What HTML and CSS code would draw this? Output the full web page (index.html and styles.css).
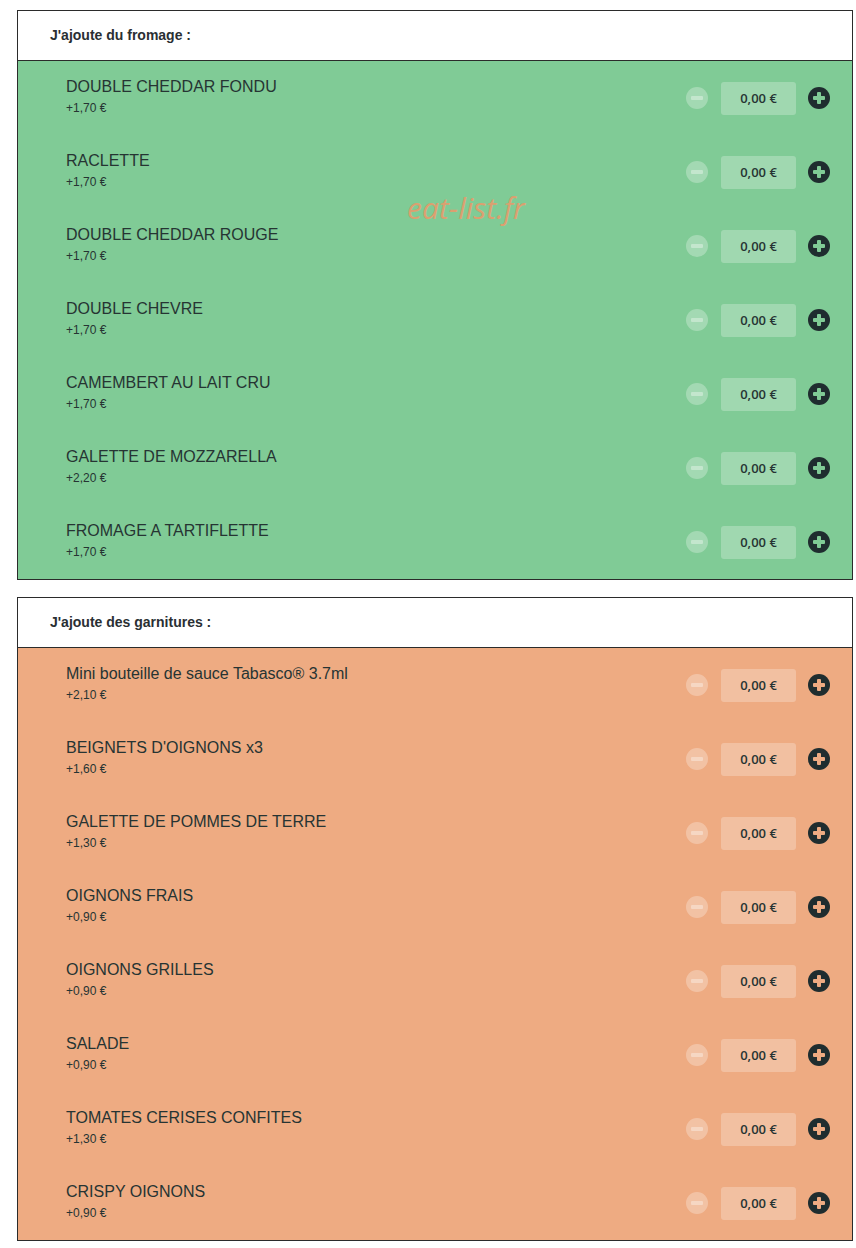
FILE: index.html
```html
<!DOCTYPE html>
<html lang="fr">
<head>
<meta charset="UTF-8">
<title>Suppléments</title>
<link rel="stylesheet" href="styles.css">
</head>
<body>
<div class="group group-green">
<div class="group-title">J'ajoute du fromage :</div>
<div class="items">
<div class="watermark">eat-list.fr</div>
<div class="item"><div class="info"><div class="name">DOUBLE CHEDDAR FONDU</div><div class="price">+1,70 €</div></div><div class="qty"><span class="minus"></span><span class="total">0,00 €</span><span class="plus"></span></div></div>
<div class="item"><div class="info"><div class="name">RACLETTE</div><div class="price">+1,70 €</div></div><div class="qty"><span class="minus"></span><span class="total">0,00 €</span><span class="plus"></span></div></div>
<div class="item"><div class="info"><div class="name">DOUBLE CHEDDAR ROUGE</div><div class="price">+1,70 €</div></div><div class="qty"><span class="minus"></span><span class="total">0,00 €</span><span class="plus"></span></div></div>
<div class="item"><div class="info"><div class="name">DOUBLE CHEVRE</div><div class="price">+1,70 €</div></div><div class="qty"><span class="minus"></span><span class="total">0,00 €</span><span class="plus"></span></div></div>
<div class="item"><div class="info"><div class="name">CAMEMBERT AU LAIT CRU</div><div class="price">+1,70 €</div></div><div class="qty"><span class="minus"></span><span class="total">0,00 €</span><span class="plus"></span></div></div>
<div class="item"><div class="info"><div class="name">GALETTE DE MOZZARELLA</div><div class="price">+2,20 €</div></div><div class="qty"><span class="minus"></span><span class="total">0,00 €</span><span class="plus"></span></div></div>
<div class="item"><div class="info"><div class="name">FROMAGE A TARTIFLETTE</div><div class="price">+1,70 €</div></div><div class="qty"><span class="minus"></span><span class="total">0,00 €</span><span class="plus"></span></div></div>
</div>
</div>

<div class="group group-orange">
<div class="group-title">J'ajoute des garnitures :</div>
<div class="items">
<div class="item"><div class="info"><div class="name">Mini bouteille de sauce Tabasco® 3.7ml</div><div class="price">+2,10 €</div></div><div class="qty"><span class="minus"></span><span class="total">0,00 €</span><span class="plus"></span></div></div>
<div class="item"><div class="info"><div class="name">BEIGNETS D'OIGNONS x3</div><div class="price">+1,60 €</div></div><div class="qty"><span class="minus"></span><span class="total">0,00 €</span><span class="plus"></span></div></div>
<div class="item"><div class="info"><div class="name">GALETTE DE POMMES DE TERRE</div><div class="price">+1,30 €</div></div><div class="qty"><span class="minus"></span><span class="total">0,00 €</span><span class="plus"></span></div></div>
<div class="item"><div class="info"><div class="name">OIGNONS FRAIS</div><div class="price">+0,90 €</div></div><div class="qty"><span class="minus"></span><span class="total">0,00 €</span><span class="plus"></span></div></div>
<div class="item"><div class="info"><div class="name">OIGNONS GRILLES</div><div class="price">+0,90 €</div></div><div class="qty"><span class="minus"></span><span class="total">0,00 €</span><span class="plus"></span></div></div>
<div class="item"><div class="info"><div class="name">SALADE</div><div class="price">+0,90 €</div></div><div class="qty"><span class="minus"></span><span class="total">0,00 €</span><span class="plus"></span></div></div>
<div class="item"><div class="info"><div class="name">TOMATES CERISES CONFITES</div><div class="price">+1,30 €</div></div><div class="qty"><span class="minus"></span><span class="total">0,00 €</span><span class="plus"></span></div></div>
<div class="item"><div class="info"><div class="name">CRISPY OIGNONS</div><div class="price">+0,90 €</div></div><div class="qty"><span class="minus"></span><span class="total">0,00 €</span><span class="plus"></span></div></div>
</div>
</div>
</body>
</html>
```

FILE: styles.css
```css
body {
margin: 10px 0 0 17px;
background-color: #fff;
font-family: "Liberation Sans", Arial, sans-serif;
color: #263433;
}

.group {
width: 834px;
border: 1px solid #2b2b2b;
margin-bottom: 17px;
}

.group-title {
height: 49px;
line-height: 49px;
padding-left: 32px;
background-color: #fff;
border-bottom: 1px solid #2b2b2b;
font-size: 14px;
font-weight: bold;
color: #2a2f33;
}

.items {
position: relative;
}

.group-green .items {
background-color: #80cb96;
}

.group-orange .items {
background-color: #eeab82;
}

.item {
height: 74px;
display: flex;
align-items: center;
justify-content: space-between;
padding: 0 22px 0 48px;
}

.info {
margin-top: -3px;
}

.name {
font-size: 16px;
line-height: 20px;
}

.price {
font-size: 12px;
line-height: 16px;
margin-top: 3px;
}

/* quantity controls on the right of each row */
.qty {
display: flex;
align-items: center;
}

.minus, .plus {
position: relative;
width: 22px;
height: 22px;
border-radius: 50%;
}

.minus {
background-color: rgba(255, 255, 255, 0.28);
}

.plus {
background-color: #1f2d2f;
}

.minus::before, .plus::before, .plus::after {
content: "";
position: absolute;
background-color: rgba(255, 255, 255, 0.35);
left: 5px;
top: 9px;
width: 12px;
height: 4px;
border-radius: 1px;
}

.plus::before, .plus::after {
background-color: #80cb96;
}

.group-orange .plus::before, .group-orange .plus::after {
background-color: #eeab82;
}

.plus::after {
left: 9px;
top: 5px;
width: 4px;
height: 12px;
}

.total {
width: 75px;
height: 33px;
line-height: 33px;
margin: 0 12px 0 13px;
text-align: center;
font-family: "Open Sans", sans-serif;
font-size: 13px;
font-weight: 600;
border-radius: 3px;
background-color: rgba(255, 255, 255, 0.25);
}

.watermark {
position: absolute;
left: 389px;
top: 126px;
font-family: "Open Sans", sans-serif;
font-style: italic;
font-size: 30px;
color: #e59c6c;
opacity: 0.9;
}
```
